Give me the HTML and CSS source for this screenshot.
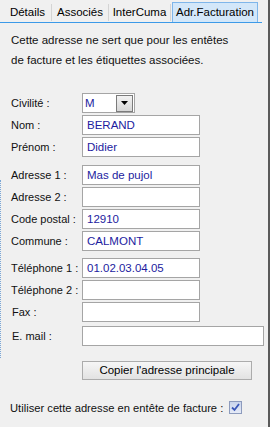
FILE: index.html
```html
<!DOCTYPE html>
<html lang="fr">
<head>
    <meta charset="UTF-8">
    <meta name="viewport" content="width=device-width, initial-scale=1.0">
    <title>Adr.Facturation</title>
    <link rel="stylesheet" href="styles.css">
</head>
<body>
    <div class="panel">
        <div class="tabs">
            <div class="tab tab-details">Détails</div>
            <div class="tab tab-assoc">Associés</div>
            <div class="tab tab-cuma">InterCuma</div>
            <div class="tab tab-fact active">Adr.Facturation</div>
        </div>

        <p class="note">Cette adresse ne sert que pour les entêtes<br>de facture et les étiquettes associées.</p>

        <div class="group group-first">
            <div class="row">
                <span class="label">Civilité :</span>
                <div class="select">
                    <span class="select-value">M</span>
                    <span class="select-btn">
                        <svg width="7" height="4" viewBox="0 0 7 4"><path d="M0 0H7L3.5 4Z" fill="#000"/></svg>
                    </span>
                </div>
            </div>
            <div class="row">
                <span class="label">Nom :</span>
                <div class="field">BERAND</div>
            </div>
            <div class="row">
                <span class="label">Prénom :</span>
                <div class="field">Didier</div>
            </div>
        </div>

        <div class="group group-addr">
            <div class="row">
                <span class="label">Adresse 1 :</span>
                <div class="field">Mas de pujol</div>
            </div>
            <div class="row">
                <span class="label">Adresse 2 :</span>
                <div class="field"></div>
            </div>
            <div class="row">
                <span class="label">Code postal :</span>
                <div class="field">12910</div>
            </div>
            <div class="row">
                <span class="label">Commune :</span>
                <div class="field">CALMONT</div>
            </div>
        </div>

        <div class="group group-tel">
            <div class="row">
                <span class="label">Téléphone 1 :</span>
                <div class="field">01.02.03.04.05</div>
            </div>
            <div class="row">
                <span class="label">Téléphone 2 :</span>
                <div class="field"></div>
            </div>
            <div class="row">
                <span class="label label-indent">Fax :</span>
                <div class="field"></div>
            </div>
            <div class="row row-mail">
                <span class="label label-indent">E. mail :</span>
                <div class="field field-wide"></div>
            </div>
        </div>

        <div class="actions">
            <div class="button">Copier l'adresse principale</div>
        </div>

        <div class="use-row">
            <span>Utiliser cette adresse en entête de facture :</span>
            <span class="check">
                <svg width="9" height="9" viewBox="0 0 9 9"><path d="M1 4.5L3.5 7L8 1" fill="none" stroke="#3a57b8" stroke-width="1.8"/></svg>
            </span>
        </div>

        <div class="edge"></div>
    </div>
</body>
</html>
```

FILE: styles.css
```css
body {
    margin: 0;
    padding: 0;
    background-color: #f0f0f0;
    font-family: "Liberation Sans", Arial, sans-serif;
    font-size: 11.5px;
    color: #000000;
}

.panel {
    position: relative;
    width: 268px;
    height: 427px;
    border-right: 2px solid #5a5a5a;
    overflow: hidden;
}

/* onglets */
.tabs {
    display: flex;
    align-items: flex-end;
    height: 22px;
    margin-right: 6px;
    padding-left: 4px;
    border-bottom: 1px solid #3c9ae8;
}

.tab {
    height: 17px;
    line-height: 17px;
    text-align: center;
    white-space: nowrap;
    border-right: 1px solid #d4d4d4;
    margin-bottom: 1px;
}

.tab-details { width: 47px; }
.tab-assoc { width: 56px; }
.tab-cuma { width: 61px; margin-right: 1px; }

.tab.active {
    width: 84px;
    height: 19px;
    line-height: 19px;
    margin-bottom: 0;
    background-color: #d3e7f9;
    border: 1px solid #7fb6ea;
    border-bottom: none;
}

.note {
    margin: 7px 0 0 11px;
    line-height: 20px;
    color: #111111;
}

/* lignes du formulaire */
.group {
    display: flex;
    flex-direction: column;
    gap: 2px;
}

.group-first { margin-top: 23px; }
.group-addr { margin-top: 8px; }
.group-tel { margin-top: 7px; }

.row {
    display: flex;
    align-items: center;
    height: 20px;
}

.row-mail { margin-top: 2px; }

.label {
    width: 71px;
    padding-left: 11px;
    flex-shrink: 0;
    white-space: nowrap;
    font-size: 11px;
    color: #111111;
}

.label-indent {
    width: 70px;
    padding-left: 12px;
}

.field {
    width: 112px;
    height: 18px;
    line-height: 18px;
    padding-left: 4px;
    background-color: #ffffff;
    border: 1px solid #a5a5a5;
    color: #1c1ca0;
}

.field-wide { width: 176px; }

.select {
    display: flex;
    justify-content: space-between;
    align-items: center;
    width: 49px;
    height: 18px;
    padding-left: 2px;
    background-color: #ffffff;
    border: 1px solid #a5a5a5;
    color: #1c1ca0;
}

.select-btn {
    display: flex;
    justify-content: center;
    align-items: center;
    width: 15px;
    height: 15px;
    margin-right: 1px;
    background: linear-gradient(#f2f2f2, #d6d6d6);
    border: 1px solid #7b7b7b;
}

.actions {
    margin: 15px 0 0 82px;
}

.button {
    width: 168px;
    height: 17px;
    line-height: 17px;
    text-align: center;
    background: linear-gradient(#f6f6f6, #e2e2e2);
    border: 1px solid #acacac;
}

.use-row {
    display: flex;
    align-items: center;
    gap: 6px;
    margin: 21px 0 0 10px;
    white-space: nowrap;
    font-size: 11.2px;
    color: #111111;
}

.check {
    display: flex;
    justify-content: center;
    align-items: center;
    width: 11px;
    height: 11px;
    background: linear-gradient(#c9d4ec, #e6ebf7);
    border: 1px solid #8d9bbd;
}

/* bord pointillé à gauche */
.edge {
    position: absolute;
    left: 0;
    top: 180px;
    width: 1px;
    height: 178px;
    border-left: 1px dotted #7aa6d6;
}
```
